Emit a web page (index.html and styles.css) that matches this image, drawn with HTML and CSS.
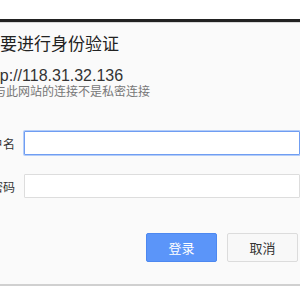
FILE: index.html
```html
<!DOCTYPE html>
<html lang="zh-CN">
<head>
    <meta charset="UTF-8">
    <meta name="viewport" content="width=device-width, initial-scale=1.0">
    <title>需要进行身份验证</title>
    <link rel="stylesheet" href="styles.css">
</head>
<body>
    <div class="auth-dialog">
        <h1 class="auth-title">需要进行身份验证</h1>
        <p class="auth-origin">http://118.31.32.136</p>
        <p class="auth-note">您与此网站的连接不是私密连接</p>

        <form class="auth-form">
            <div class="form-row">
                <label for="username">用户名</label>
                <input type="text" id="username" class="focused">
            </div>
            <div class="form-row">
                <label for="password">密码</label>
                <input type="password" id="password">
            </div>
            <div class="button-row">
                <button type="submit" class="btn btn-primary">登录</button>
                <button type="button" class="btn btn-cancel">取消</button>
            </div>
        </form>
    </div>
</body>
</html>
```

FILE: styles.css
```css
* {
    margin: 0;
    padding: 0;
    box-sizing: border-box;
}

body {
    font-family: "Liberation Sans", "Noto Sans CJK SC", sans-serif;
    background-color: #fff;
    width: 300px;
    height: 300px;
    overflow: hidden;
}

/* dialog is wider than the window, its left part is cut off */
.auth-dialog {
    margin-top: 19px;
    margin-left: -42px;
    width: 346px;
    background: #fafafa;
    border-top: 3px solid #222;
    border-bottom: 2px solid #d0d0d0;
    box-shadow: inset 0 1px 0 #d8d8d8;
    padding: 12px 0 22px 24px;
}

.auth-title {
    font-size: 17px;
    font-weight: normal;
    line-height: 22px;
    color: #222;
    margin-left: 1px;
    margin-bottom: 12px;
}

.auth-origin {
    font-size: 16px;
    line-height: 16px;
    color: #333;
}

.auth-note {
    font-size: 12px;
    line-height: 16px;
    color: #777;
    margin-bottom: 31px;
}

.form-row {
    display: flex;
    align-items: center;
    margin-bottom: 19px;
}

.form-row label {
    flex: 0 0 40px;
    margin-left: -7px;
    margin-right: 9px;
    text-align: right;
    white-space: nowrap;
    font-size: 12px;
    color: #333;
}

.form-row input {
    width: 276px;
    height: 24px;
    border: 1px solid #ddd;
    border-radius: 1px;
    background: #fff;
    outline: none;
}

.form-row input.focused {
    border: 1px solid #6f9df2;
    box-shadow: 0 0 0 1px #b4cdf8;
}

.button-row {
    display: flex;
    gap: 10px;
    padding-left: 164px;
    margin-top: 35px;
}

.btn {
    width: 71px;
    height: 29px;
    border-radius: 2px;
    font-family: "Noto Sans CJK SC", sans-serif;
    font-size: 13px;
    cursor: pointer;
}

.btn-primary {
    background-color: #5b95f9;
    border: 1px solid #4d88f0;
    color: #fff;
}

.btn-cancel {
    background-color: #f8f8f8;
    border: 1px solid #dcdcdc;
    color: #333;
}
```
